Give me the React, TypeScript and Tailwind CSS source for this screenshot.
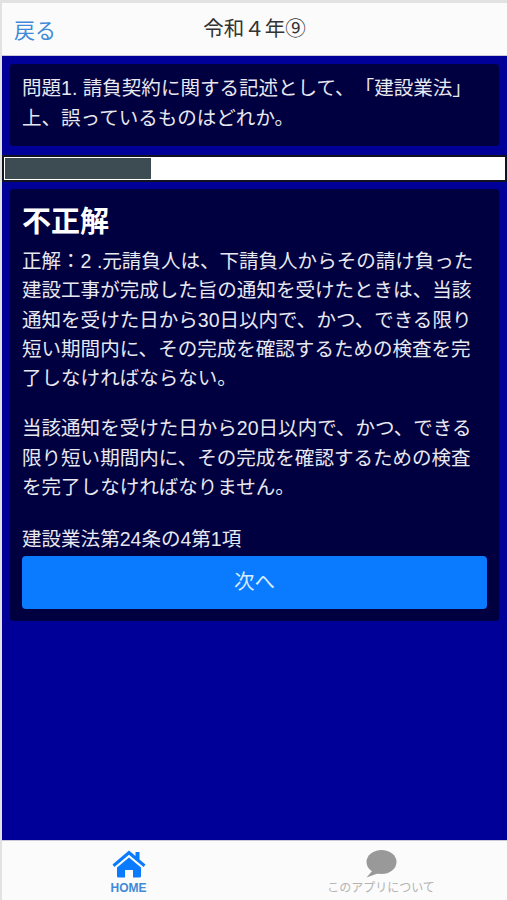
const font = "font-['Liberation_Sans','Noto_Sans_CJK_JP',sans-serif] [text-spacing-trim:space-all]";

function HomeIcon() {
  return (
    <svg width={34} height={28} viewBox="0 0 34 28" fill="#0a7bff">
      <path d="M17 0.5 L23.5 6 V2 H27.5 V9.4 L33.5 14.6 L31.6 17 L17 4.8 L2.4 17 L0.5 14.6 Z" />
      <path d="M17 7.6 L29 17.4 V26 Q29 27.5 27.5 27.5 H21 V20 H13 V27.5 H6.5 Q5 27.5 5 26 V17.4 Z" />
    </svg>
  );
}

function BubbleIcon() {
  return (
    <svg width={32} height={28} viewBox="0 0 32 28" fill="#999999">
      <ellipse cx="16.5" cy="12" rx="15" ry="12" />
      <path d="M8 20 L1.5 27.5 L14 23 Z" />
    </svg>
  );
}

export default function App() {
  return (
    <div className={`flex h-[900px] w-[507px] flex-col overflow-hidden bg-[#e2e2e2] pt-[3px] pl-[2px] ${font}`}>
      {/* ナビゲーションバー */}
      <header className="relative flex h-[53px] shrink-0 items-center justify-center border-b border-[#c8c8d8] bg-[#fbfbfb]">
        <span className="absolute left-[12px] top-[14px] text-[21px] leading-[28px] text-[#3f8ad8]">戻る</span>
        <h1 className="text-[20.5px] font-normal text-[#333333]">令和４年⑨</h1>
      </header>

      <main className="flex flex-1 flex-col bg-[#000099] pt-[8px]">
        <section className="mx-[8px] h-[82px] rounded-[3px] bg-[#000040] px-[12px] pt-[9px] text-[19.55px] leading-[30px] text-[#e8e8f0]">
          <p>問題1. 請負契約に関する記述として、「建設業法」</p>
          <p>上、誤っているものはどれか。</p>
        </section>

        <div className="mt-[9px] h-[27px] border-2 border-[#111122] bg-white p-[1px] pr-0">
          <div className="h-full w-[29.2%] bg-[#3d4b52]" />
        </div>

        <section className="mx-[8px] mt-[7px] flex h-[432px] flex-col rounded-[3px] bg-[#000040] px-[12px] pt-[14px] text-[#e8e8f0]">
          <h2 className="text-[29px] font-bold leading-[38px] text-white">不正解</h2>
          <p className="mt-[6px] text-[19.55px] leading-[29.3px]">
            正解：2 .元請負人は、下請負人からその請け負った<br />
            建設工事が完成した旨の通知を受けたときは、当該<br />
            通知を受けた日から30日以内で、かつ、できる限り<br />
            短い期間内に、その完成を確認するための検査を完<br />
            了しなければならない。
          </p>
          <p className="mt-[21px] text-[19.55px] leading-[29.3px]">
            当該通知を受けた日から20日以内で、かつ、できる<br />
            限り短い期間内に、その完成を確認するための検査<br />
            を完了しなければなりません。
          </p>
          <p className="mt-[23px] text-[19.55px] leading-[29.3px]">建設業法第24条の4第1項</p>
          <button className="mt-[1px] h-[53px] w-full rounded-[4px] bg-[#0a7bff] text-[20.5px] text-[#d8ecff]">次へ</button>
        </section>
      </main>

      {/* タブバー */}
      <nav className="flex h-[60px] shrink-0 border-t border-[#c8c8d8] bg-[#fbfbfb]">
        <div className="flex w-[253px] flex-col items-center pt-[9px]">
          <HomeIcon />
          <span className="mt-[3px] text-[12px] leading-[14px] font-bold text-[#3f8ad8]">HOME</span>
        </div>
        <div className="flex flex-1 flex-col items-center pt-[9px]">
          <BubbleIcon />
          <span className="mt-[3px] text-[12px] leading-[14px] text-[#b4b4b4]">このアプリについて</span>
        </div>
      </nav>
    </div>
  );
}
